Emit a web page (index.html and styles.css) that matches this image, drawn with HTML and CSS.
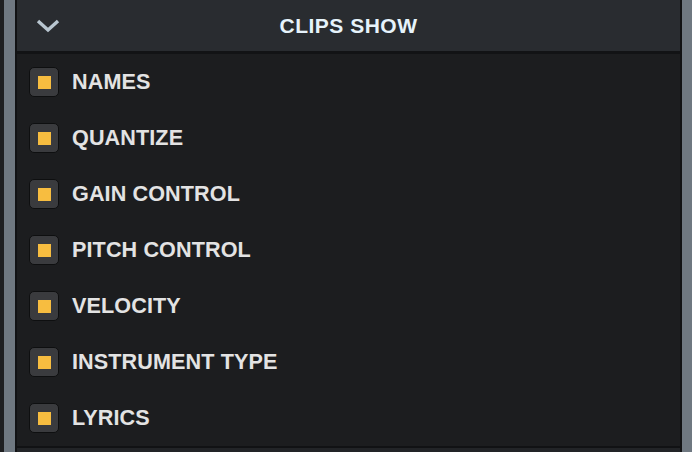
FILE: index.html
```html
<!DOCTYPE html>
<html lang="en">
<head>
    <meta charset="UTF-8">
    <title>Clips Show</title>
    <link rel="stylesheet" href="styles.css">
</head>
<body>
    <div class="frame">
        <div class="panel">

            <div class="panel-header">
                <svg class="chevron" width="24" height="14" viewBox="0 0 24 14">
                    <path d="M2 2 L12 11 L22 2" fill="none" stroke="#b8c6d0" stroke-width="3.4" stroke-linejoin="miter" stroke-linecap="butt"/>
                </svg>
                <h2>CLIPS SHOW</h2>
            </div>

            <ul class="options">
                <li><span class="check on"></span>NAMES</li>
                <li><span class="check on"></span>QUANTIZE</li>
                <li><span class="check on"></span>GAIN CONTROL</li>
                <li><span class="check on"></span>PITCH CONTROL</li>
                <li><span class="check on"></span>VELOCITY</li>
                <li><span class="check on"></span>INSTRUMENT TYPE</li>
                <li><span class="check on"></span>LYRICS</li>
            </ul>

            <div class="next-section"></div>
        </div>
    </div>
</body>
</html>
```

FILE: styles.css
```css
html, body {
    height: 100%;
}

body {
    margin: 0;
    background-color: #1e1f21;
    font-family: "Liberation Sans", Arial, sans-serif;
    overflow: hidden;
}

/* gray rails on both sides of the panel */
.frame {
    margin-left: 4px;
    height: 100%;
    background-color: #6f7881;
    padding: 0 10px 0 11px;
}

.panel {
    height: 100%;
    border-left: 2px solid #111214;
    border-right: 2px solid #111214;
    background-color: #1c1d1f;
    display: flex;
    flex-direction: column;
}

.panel-header {
    position: relative;
    height: 51px;
    background-color: #292c30;
    border-bottom: 3px solid #121315;
    display: flex;
    align-items: center;
    justify-content: center;
}

.chevron {
    position: absolute;
    left: 19px;
    top: 19px;
}

.panel-header h2 {
    margin: 0;
    font-size: 21px;
    font-weight: bold;
    color: #e6f3fb;
    letter-spacing: 0.5px;
}

.options {
    list-style: none;
    margin: 0;
    padding: 0;
}

.options li {
    height: 56px;
    display: flex;
    align-items: center;
    gap: 13px;
    padding-left: 12px;
    font-size: 21.6px;
    font-weight: bold;
    color: #e3e3e3;
    letter-spacing: 0.1px;
}

.check {
    width: 28px;
    height: 28px;
    border: 1px solid #0e0f10;
    border-radius: 5px;
    background-color: #3a3b3e;
    display: flex;
    align-items: center;
    justify-content: center;
}

.check.on::after {
    content: "";
    width: 13px;
    height: 13px;
    background-color: #f7bd40;
}

.next-section {
    flex: 1;
    border-top: 2px solid #111214;
    background-color: #222427;
}
```
